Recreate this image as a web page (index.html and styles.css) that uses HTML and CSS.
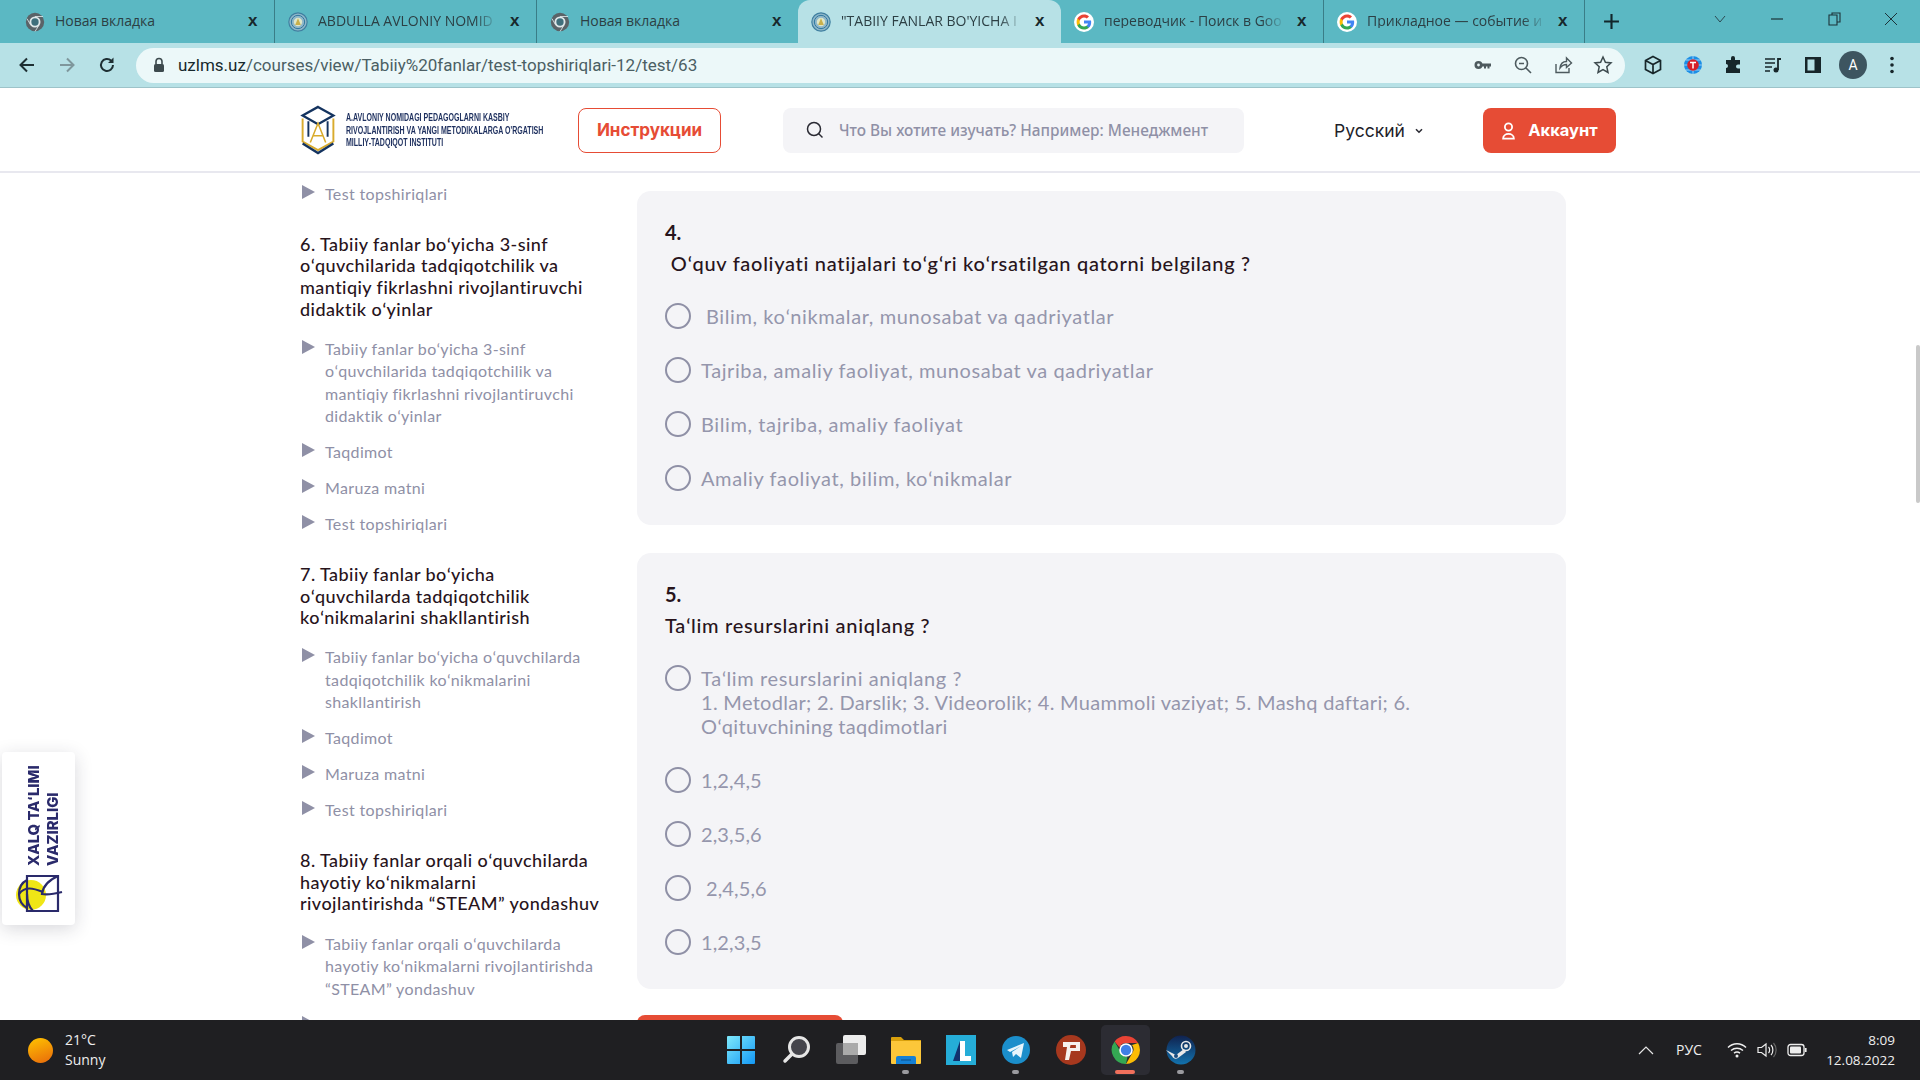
FILE: index.html
```html
<!DOCTYPE html>
<html lang="ru">
<head>
<meta charset="utf-8">
<title>uzlms</title>
<link rel="stylesheet" href="styles.css">
</head>
<body>
<svg class="defs" width="0" height="0">
  <defs>
    <symbol id="g-chrome" viewBox="0 0 24 24"><circle cx="12" cy="12" r="11" fill="#5a6368"/><circle cx="12" cy="12" r="6.6" fill="#dfe8ea"/><circle cx="12" cy="12" r="4.4" fill="#3f6f7c"/><path d="M12 5.4h9.6M7 16l-4.6-8M16.8 15.8L12 23.4" stroke="#dfe8ea" stroke-width="1"/></symbol>
    <symbol id="g-seal" viewBox="0 0 24 24"><circle cx="12" cy="12" r="11" fill="#8fb7c9" stroke="#3f7fa0" stroke-width="1.4"/><circle cx="12" cy="12" r="8" fill="none" stroke="#2f78a0" stroke-width="1.2"/><circle cx="12" cy="12" r="5" fill="#dfe7c8"/><path d="M12 7.5l3.4 8h-6.8z" fill="#c9b04c"/></symbol>
    <symbol id="g-google" viewBox="0 0 24 24"><circle cx="12" cy="12" r="12" fill="#fff"/><path d="M20.6 12.2c0-.7-.1-1.3-.2-1.9H12v3.6h4.8c-.2 1.1-.8 2.1-1.8 2.7v2.3h2.9c1.7-1.6 2.7-3.9 2.7-6.7z" fill="#4285f4"/><path d="M12 21c2.4 0 4.5-.8 5.9-2.2L15 16.6c-.8.5-1.8.9-3 .9-2.3 0-4.3-1.6-5-3.7H4v2.3C5.5 19 8.5 21 12 21z" fill="#34a853"/><path d="M7 13.8c-.4-1.1-.4-2.4 0-3.6V7.9H4c-1.2 2.5-1.2 5.6 0 8.2z" fill="#fbbc05"/><path d="M12 6.5c1.3 0 2.5.5 3.4 1.3L18 5.3C16.400 3.800 14.300 3 12 3 8.500 3 5.500 5 4 7.900l3 2.300c.7-2.100 2.700-3.700 5-3.700z" fill="#ea4335"/></symbol>
  </defs>
</svg>
<div class="screen">
  <div class="tabstrip">
    <div class="tab"><svg class="fav"><use href="#g-chrome"/></svg><span class="tab-title">Новая вкладка</span><span class="tab-x">x</span></div>
    <div class="tab sep"><svg class="fav"><use href="#g-seal"/></svg><span class="tab-title fade">ABDULLA AVLONIY NOMID</span><span class="tab-x">x</span></div>
    <div class="tab sep"><svg class="fav"><use href="#g-chrome"/></svg><span class="tab-title">Новая вкладка</span><span class="tab-x">x</span></div>
    <div class="tab active"><svg class="fav"><use href="#g-seal"/></svg><span class="tab-title fade">"TABIIY FANLAR BO'YICHA I</span><span class="tab-x">x</span></div>
    <div class="tab"><svg class="fav"><use href="#g-google"/></svg><span class="tab-title fade">переводчик - Поиск в Goo</span><span class="tab-x">x</span></div>
    <div class="tab sep end"><svg class="fav"><use href="#g-google"/></svg><span class="tab-title fade">Прикладное — событие и</span><span class="tab-x">x</span></div>
    <svg class="newtab" viewBox="0 0 16 16"><path d="M8 1v14M1 8h14" stroke="#12262b" stroke-width="2"/></svg>
    <div class="winctl">
      <svg class="wc" viewBox="0 0 16 16"><path d="M3 5l5 6 5-6" fill="none" stroke="#2c4a52" stroke-width="1"/></svg>
      <svg class="wc" viewBox="0 0 16 16"><path d="M2 8h12" stroke="#1c3238" stroke-width="1.2"/></svg>
      <svg class="wc" viewBox="0 0 16 16"><path d="M3 4h8v10H3zM6 4V2h8v9h-3" fill="none" stroke="#1c3238" stroke-width="1.100"/></svg>
      <svg class="wc" viewBox="0 0 16 16"><path d="M2 2l12 12M14 2L2 14" stroke="#1c3238" stroke-width="1"/></svg>
    </div>
  </div>

  <div class="toolbar">
    <svg class="tb" viewBox="0 0 20 20"><path d="M17 10H4M10 3.500L3.500 10l6.500 6.500" fill="none" stroke="#1e2f33" stroke-width="2"/></svg>
    <svg class="tb" viewBox="0 0 20 20"><path d="M3 10h13M10 3.500L16.500 10 10 16.500" fill="none" stroke="#7f979c" stroke-width="2"/></svg>
    <svg class="tb" viewBox="0 0 20 20"><path d="M16 10a6 6 0 1 1-1.800-4.300" fill="none" stroke="#1e2f33" stroke-width="2"/><path d="M16.500 2.500v5.500H11z" fill="#1e2f33"/></svg>
    <div class="omnibox">
      <svg class="lock" viewBox="0 0 12 16"><path d="M3 7V4.500a3 3 0 0 1 6 0V7" fill="none" stroke="#3d4a4e" stroke-width="1.600"/><rect x="1" y="7" width="10" height="8" rx="1.500" fill="#3d4a4e"/></svg>
      <span class="url"><b class="host">uzlms.uz</b>/courses/view/Tabiiy%20fanlar/test-topshiriqlari-12/test/63</span>
      <div class="omni-icons">
        <svg class="oi" viewBox="0 0 20 20"><circle cx="5.500" cy="10" r="4" fill="#4d5a5e"/><circle cx="5.500" cy="10" r="1.400" fill="#ecf8f9"/><path d="M9 8.500h9v3h-1.500v2h-2v-2H13v2h-2v-2H9z" fill="#4d5a5e"/></svg>
        <svg class="oi" viewBox="0 0 20 20"><circle cx="8.500" cy="8.500" r="6" fill="none" stroke="#4d5a5e" stroke-width="1.600"/><path d="M13 13l5 5M6 8.500h5" stroke="#4d5a5e" stroke-width="1.600"/></svg>
        <svg class="oi" viewBox="0 0 20 20"><path d="M3 9v8.500h13V13" fill="none" stroke="#4d5a5e" stroke-width="1.400"/><path d="M7 13c.5-4 3-6.500 6.500-6.500V3L18.500 8l-5 4.500V9.500C10.500 9.500 8.500 11 7 13z" fill="none" stroke="#4d5a5e" stroke-width="1.400"/></svg>
        <svg class="oi" viewBox="0 0 20 20"><path d="M10 2l2.400 5.300 5.600.6-4.200 3.900 1.200 5.700L10 14.600l-5 2.900 1.200-5.700L2 7.900l5.600-.6z" fill="none" stroke="#3d4a4e" stroke-width="1.500"/></svg>
      </div>
    </div>
    <div class="ext">
      <svg class="ex" viewBox="0 0 20 20"><path d="M10 1.500l7.500 4v9L10 18.500l-7.500-4v-9zM2.500 5.500l7.500 4 7.500-4M10 9.500v9" fill="none" stroke="#17262a" stroke-width="1.700"/></svg>
      <svg class="ex" viewBox="0 0 20 20"><circle cx="10" cy="10" r="9" fill="#1c8fe6"/><path d="M1 10h18M10 1v18M3 5h14M3 15h14" stroke="#cfe9fb" stroke-width=".7"/><circle cx="10" cy="10" r="5.800" fill="#d5202a"/><path d="M7 7.500h6M10 7.500v6" stroke="#fff" stroke-width="1.500"/></svg>
      <svg class="ex" viewBox="0 0 20 20"><path d="M8 3a2 2 0 0 1 4 0v2h5v4.500h-2a2 2 0 0 0 0 4h2V18H3v-5a2 2 0 0 0 0-4V5h5z" fill="#17262a"/></svg>
      <svg class="ex" viewBox="0 0 20 20"><path d="M2 4h10M2 8h10M2 12h7M2 16h5" stroke="#17262a" stroke-width="1.600"/><path d="M15 3v12" stroke="#17262a" stroke-width="1.800"/><circle cx="13" cy="15" r="2.500" fill="#17262a"/><path d="M15 3h3v2h-3z" fill="#17262a"/></svg>
      <svg class="ex" viewBox="0 0 20 20"><path d="M2 2h16v16H2z" fill="#17262a"/><path d="M4.500 4.500h7v11h-7z" fill="#b7e1e6"/></svg>
      <span class="avatar">A</span>
      <svg class="dots" viewBox="0 0 6 20"><circle cx="3" cy="3.500" r="1.800" fill="#17262a"/><circle cx="3" cy="10" r="1.800" fill="#17262a"/><circle cx="3" cy="16.500" r="1.800" fill="#17262a"/></svg>
    </div>
  </div>

  <div class="page">
    <header class="site-head">
      <div class="brand">
        <svg class="brand-mark" viewBox="0 0 36 52">
          <path d="M18 2L34 11 18 20 2 11z" fill="none" stroke="#14335f" stroke-width="2.400"/>
          <path d="M8 17v16M28 17v16" stroke="#14335f" stroke-width="2"/>
          <path d="M2 14v24l16 9 16-9V14" fill="none" stroke="#d9ab2d" stroke-width="2"/>
          <path d="M2 40l16 10 16-10" fill="none" stroke="#14335f" stroke-width="2.400"/>
          <path d="M10 39l8-20 8 20M13 32h10" fill="none" stroke="#d9ab2d" stroke-width="1.600"/>
        </svg>
        <div class="brand-text">A.AVLONIY NOMIDAGI PEDAGOGLARNI KASBIY<br>RIVOJLANTIRISH VA YANGI METODIKALARGA O'RGATISH<br>MILLIY-TADQIQOT INSTITUTI</div>
      </div>
      <a class="btn-outline">Инструкции</a>
      <div class="search">
        <svg class="search-ic" viewBox="0 0 20 20"><circle cx="9" cy="9" r="6.500" fill="none" stroke="#2a2a33" stroke-width="1.500"/><path d="M13.500 13.500l4 4" stroke="#2a2a33" stroke-width="1.500"/></svg>
        <span class="search-ph">Что Вы хотите изучать? Например: Менеджмент</span>
      </div>
      <div class="lang">Русский<svg class="caret" viewBox="0 0 10 10"><path d="M2.500 3.500l2.500 2.500 2.500-2.500" fill="none" stroke="#2a2a33" stroke-width="1.300"/></svg></div>
      <a class="btn-solid"><svg class="user" viewBox="0 0 16 20"><circle cx="8" cy="5.500" r="4" fill="none" stroke="#fff" stroke-width="2"/><path d="M2 18.500c0-7 12-7 12 0z" fill="none" stroke="#fff" stroke-width="2"/></svg>Аккаунт</a>
    </header>

    <div class="body">
      <aside class="side">
        <ul class="items first"><li class="item">Test topshiriqlari</li></ul>
        <h3 class="module">6. Tabiiy fanlar boʻyicha 3-sinf oʻquvchilarida tadqiqotchilik va mantiqiy fikrlashni rivojlantiruvchi didaktik oʻyinlar</h3>
        <ul class="items">
          <li class="item">Tabiiy fanlar boʻyicha 3-sinf oʻquvchilarida tadqiqotchilik va mantiqiy fikrlashni rivojlantiruvchi didaktik oʻyinlar</li>
          <li class="item">Taqdimot</li>
          <li class="item">Maruza matni</li>
          <li class="item">Test topshiriqlari</li>
        </ul>
        <h3 class="module">7. Tabiiy fanlar boʻyicha oʻquvchilarda tadqiqotchilik koʻnikmalarini shakllantirish</h3>
        <ul class="items">
          <li class="item">Tabiiy fanlar boʻyicha oʻquvchilarda tadqiqotchilik koʻnikmalarini shakllantirish</li>
          <li class="item">Taqdimot</li>
          <li class="item">Maruza matni</li>
          <li class="item">Test topshiriqlari</li>
        </ul>
        <h3 class="module">8. Tabiiy fanlar orqali oʻquvchilarda hayotiy koʻnikmalarni rivojlantirishda “STEAM” yondashuv</h3>
        <ul class="items">
          <li class="item">Tabiiy fanlar orqali oʻquvchilarda hayotiy koʻnikmalarni rivojlantirishda “STEAM” yondashuv</li>
          <li class="item">Taqdimot</li>
        </ul>
      </aside>
      <main class="main">
        <section class="card">
          <div class="q-num">4.</div>
          <div class="q-text">&nbsp;Oʻquv faoliyati natijalari toʻgʻri koʻrsatilgan qatorni belgilang ?</div>
          <div class="opts">
            <label class="opt"><span class="radio"></span><span class="opt-t lead">Bilim, koʻnikmalar, munosabat va qadriyatlar</span></label>
            <label class="opt"><span class="radio"></span><span class="opt-t">Tajriba, amaliy faoliyat, munosabat va qadriyatlar</span></label>
            <label class="opt"><span class="radio"></span><span class="opt-t">Bilim, tajriba, amaliy faoliyat</span></label>
            <label class="opt"><span class="radio"></span><span class="opt-t">Amaliy faoliyat, bilim, koʻnikmalar</span></label>
          </div>
        </section>
        <section class="card">
          <div class="q-num">5.</div>
          <div class="q-text">Taʻlim resurslarini aniqlang ?</div>
          <div class="opts">
            <label class="opt"><span class="radio"></span><span class="opt-t">Taʻlim resurslarini aniqlang ?<br><span class="tight">1. Metodlar; 2. Darslik; 3. Videorolik; 4. Muammoli vaziyat; 5. Mashq daftari; 6. Oʻqituvchining taqdimotlari</span></span></label>
            <label class="opt"><span class="radio"></span><span class="opt-t nums">1,2,4,5</span></label>
            <label class="opt"><span class="radio"></span><span class="opt-t nums">2,3,5,6</span></label>
            <label class="opt"><span class="radio"></span><span class="opt-t nums lead">2,4,5,6</span></label>
            <label class="opt"><span class="radio"></span><span class="opt-t nums">1,2,3,5</span></label>
          </div>
        </section>
        <a class="submit"></a>
      </main>
    </div>

    <div class="ministry">
      <div class="ministry-text">XALQ TAʻLIMI<br>VAZIRLIGI</div>
      <svg class="ministry-ic" viewBox="0 0 50 45">
        <circle cx="16" cy="25" r="15" fill="#f0e616"/>
        <path d="M12 6h31v35H12z" fill="none" stroke="#2a2a6b" stroke-width="2.200"/>
        <path d="M12 10c-6 3-8 8-8 14s3 11 8 14" fill="none" stroke="#2a2a6b" stroke-width="2.200"/>
        <path d="M4 24c6-8 14-6 24-2M12 24c0 8 2 13 6 17M43 6c-9 4-15 10-16 18 5 1 12 0 20-2" fill="none" stroke="#2a2a6b" stroke-width="2.200"/>
      </svg>
    </div>
    <div class="scroll-thumb"></div>
  </div>

  <footer class="taskbar">
    <div class="weather">
      <span class="sun"></span>
      <div class="weather-t"><div>21°C</div><div>Sunny</div></div>
    </div>
    <div class="apps">
      <div class="app"><svg class="ai" viewBox="0 0 30 30"><defs><linearGradient id="w" x1="0" y1="0" x2="1" y2="1"><stop offset="0" stop-color="#7fe9fb"/><stop offset="1" stop-color="#1398f5"/></linearGradient></defs><path d="M1 2a1 1 0 0 1 1-1h12v13H1zM16 1h12a1 1 0 0 1 1 1v12H16zM1 16h13v13H2a1 1 0 0 1-1-1zM16 16h13v12a1 1 0 0 1-1 1H16z" fill="url(#w)"/></svg></div>
      <div class="app"><svg class="ai" viewBox="0 0 30 30"><circle cx="18" cy="12" r="9.500" fill="#45454c" stroke="#e6e6e6" stroke-width="3"/><path d="M11 19l-7 7" stroke="#e6e6e6" stroke-width="3.500" stroke-linecap="round"/></svg></div>
      <div class="app"><svg class="ai" viewBox="0 0 30 30"><rect x="0" y="8" width="22" height="21" rx="2" fill="#5c5c5f"/><rect x="7" y="0" width="23" height="20" rx="2" fill="#ececec"/><rect x="7" y="8" width="15" height="12" fill="#aaa"/></svg></div>
      <div class="app dot"><svg class="ai" viewBox="0 0 30 30"><path d="M0 3a1 1 0 0 1 1-1h9l3 3h17v7H0z" fill="#d9a00c"/><path d="M0 6h30v22a1 1 0 0 1-1 1H1a1 1 0 0 1-1-1z" fill="#fcc73a"/><path d="M5 29v-6a2 2 0 0 1 2-2h16a2 2 0 0 1 2 2v6z" fill="#1580d4"/><path d="M10 25h10" stroke="#0d4f88" stroke-width="1"/></svg></div>
      <div class="app"><svg class="ai" viewBox="0 0 30 30"><rect width="30" height="30" fill="#25add8"/><path d="M14 6h5v15h6v5H14z" fill="#fff"/><path d="M7 26L14 6v20z" fill="#12326e"/></svg></div>
      <div class="app dot"><svg class="ai" viewBox="0 0 30 30"><circle cx="15" cy="15" r="14" fill="#1b8ecb"/><path d="M6 15l17-7-3 15-5-4-3 3-1-5 9-6-11 6z" fill="#e8f5fc"/></svg></div>
      <div class="app"><svg class="ai" viewBox="0 0 30 30"><circle cx="15" cy="15" r="15" fill="#a6381e"/><path d="M7 7h17v9h-9l-2 9H9l2-13H7zM14.500 10l-.6 3h6v-3z" fill="#f6f1ee" fill-rule="evenodd"/></svg></div>
      <div class="app current"><span class="app-bg"></span><svg class="ai" viewBox="0 0 30 30"><path d="M15 1a14 14 0 0 1 12.100 7H15a7 7 0 0 0-6.500 4.400L3.600 6.500A14 14 0 0 1 15 1z" fill="#e94335"/><path d="M27.100 8A14 14 0 0 1 15 29l6-10.500A7 7 0 0 0 21 10z" fill="#fbbc05"/><path d="M15 29A14 14 0 0 1 3.600 6.500l6 10.500a7 7 0 0 0 6.800 5z" fill="#34a853"/><circle cx="15" cy="15" r="6.800" fill="#fff"/><circle cx="15" cy="15" r="5.200" fill="#3f7fe6"/></svg></div>
      <div class="app dot"><svg class="ai" viewBox="0 0 30 30"><defs><linearGradient id="st" x1="0" y1="0" x2="0" y2="1"><stop offset="0" stop-color="#10224f"/><stop offset="1" stop-color="#1272ad"/></linearGradient></defs><circle cx="15" cy="15" r="14.500" fill="url(#st)"/><circle cx="20" cy="11" r="4.500" fill="none" stroke="#e8e8e8" stroke-width="1.600"/><circle cx="20" cy="11" r="2" fill="#e8e8e8"/><path d="M0 15l10 5 8-6 2 3-8 6a4 4 0 0 1-6-2z" fill="#e8e8e8"/><circle cx="10" cy="21" r="2" fill="#1a4d80"/></svg></div>
    </div>
    <div class="tray">
      <svg class="t-caret" viewBox="0 0 16 10"><path d="M1 9l7-7 7 7" fill="none" stroke="#e6e6e6" stroke-width="1.200"/></svg>
      <span class="t-lang">РУС</span>
      <svg class="t-ic" viewBox="0 0 20 16"><path d="M1 5.500c5-5 13-5 18 0M4 8.500c3.500-3 8.500-3 12 0M7 11.200c2-1.500 4-1.500 6 0" fill="none" stroke="#eee" stroke-width="1.500"/><circle cx="10" cy="14" r="1.500" fill="#eee"/></svg>
      <svg class="t-ic" viewBox="0 0 20 16"><path d="M1 5.500h3.500L9 2v12L4.500 10.500H1z" fill="none" stroke="#eee" stroke-width="1.200"/><path d="M11.500 5c1.500 1.500 1.500 4.500 0 6M14 3c2.500 2.500 2.500 7.500 0 10" fill="none" stroke="#eee" stroke-width="1.200"/><path d="M16.500 1c3.500 4 3.500 10 0 14" fill="none" stroke="#666" stroke-width="1.200"/></svg>
      <svg class="t-ic" viewBox="0 0 20 16"><rect x="1" y="2.500" width="16" height="11" rx="2.500" fill="none" stroke="#eee" stroke-width="1.300"/><rect x="3" y="4.500" width="11" height="7" rx="1" fill="#eee"/><rect x="17.800" y="6" width="1.800" height="4" fill="#eee"/></svg>
      <div class="clock"><div>8:09</div><div>12.08.2022</div></div>
    </div>
  </footer>
</div>
</body>
</html>
```
FILE: styles.css
```css
* { box-sizing: border-box; }
html, body { margin: 0; height: 100%; overflow: hidden; }
.defs { position: absolute; }
ul { list-style: none; margin: 0; padding: 0; }
.screen { width: 1920px; height: 1080px; display: flex; flex-direction: column; background: #fff; font-family: Lato, "Noto Sans", sans-serif; }

/* Browser chrome */
.tabstrip { height: 43px; flex: none; background: #5bb8c3; display: flex; align-items: stretch; padding-left: 12px; }
.tab { width: 262px; display: flex; align-items: center; padding: 0 14px 0 13px; position: relative; font: 14px/1 "Open Sans", "Noto Sans", sans-serif; color: #2c3f44; }
.tab.sep { border-left: 1px solid #3a7d87; }
.tab.end { border-right: 1px solid #3a7d87; width: 262px; }
.tab.active { background: #b7e1e6; border-radius: 12px 12px 0 0; width: 263px; }
.fav { width: 20px; height: 20px; flex: none; margin-right: 10px; }
.tab-title { flex: 1; white-space: nowrap; min-width: 0; margin: -2px 8px 0 0; }
.tab-title.fade { -webkit-mask-image: linear-gradient(90deg, #000 85%, transparent 98%); mask-image: linear-gradient(90deg, #000 85%, transparent 98%); }
.tab-x { font: bold 17px/1 "Liberation Sans", sans-serif; color: #18282c; flex: none; width: 12px; margin-top: -2px; }
.newtab { width: 17px; height: 17px; align-self: center; margin-left: 18px; }
.winctl { margin-left: auto; display: flex; align-items: center; margin-top: -6px; padding-right: 21px; }
.wc { width: 16px; height: 16px; margin-left: 41px; }
.winctl .wc:first-child { margin-left: 0; }

.toolbar { height: 45px; flex: none; background: #b7e1e6; border-bottom: 1px solid #9dc3c9; display: flex; align-items: center; padding-left: 17px; }
.tb { width: 20px; height: 20px; margin-right: 20px; flex: none; }
.omnibox { width: 1489px; height: 35px; margin-left: -1px; background: #ecf8f9; border-radius: 18px; display: flex; align-items: center; padding: 0 12px 0 17px; flex: none; }
.lock { width: 12px; height: 16px; flex: none; margin-right: 13px; }
.url { font: 17px/1 Roboto, sans-serif; color: #4b5f64; white-space: nowrap; }
.host { font-weight: 400; color: #16282c; }
.omni-icons { margin-left: auto; display: flex; gap: 20px; }
.oi { width: 20px; height: 20px; }
.ext { display: flex; align-items: center; margin-left: 18px; gap: 20px; }
.ex { width: 20px; height: 20px; flex: none; }
.avatar { width: 28px; height: 28px; border-radius: 50%; background: #3d5560; color: #fff; font: 14px/28px Roboto, sans-serif; text-align: center; margin-left: -4px; margin-right: -2px; }
.dots { width: 6px; height: 20px; margin-left: 4px; }

/* Site */
.page { flex: 1; min-height: 0; display: flex; flex-direction: column; overflow: hidden; position: relative; }
.site-head { height: 85px; flex: none; border-bottom: 2px solid #e8e8ef; display: flex; align-items: center; padding: 1px 0 0 300px; }
.brand { display: flex; align-items: center; width: 278px; flex: none; }
.brand-mark { width: 36px; height: 50px; flex: none; margin-right: 10px; }
.brand-text { font: bold 10.500px/12.700px "Liberation Sans", sans-serif; color: #1d2f5e; white-space: nowrap; transform: scaleX(.67); transform-origin: left center; width: 130px; }
.btn-outline { width: 143px; height: 45px; border: 1px solid #e64c35; border-radius: 8px; display: flex; align-items: center; justify-content: center; padding-top: 1px; color: #e64c35; font: 700 17px/1 Inter, sans-serif; flex: none; }
.search { width: 461px; height: 45px; margin-left: 62px; background: #f4f4f7; border-radius: 8px; display: flex; align-items: center; padding-left: 22px; flex: none; }
.search-ic { width: 20px; height: 20px; flex: none; margin-right: 14px; }
.search-ph { font: 500 15.400px/1 "Noto Sans", sans-serif; color: #8f90a6; padding-top: 2px; }
.lang { margin-left: 90px; width: 149px; flex: none; display: flex; align-items: center; padding-top: 2px; font: 400 17.500px/1 Inter, sans-serif; color: #1f1f2b; }
.caret { width: 12px; height: 12px; margin-left: 8px; }
.btn-solid { width: 133px; height: 45px; background: #e64c35; border-radius: 8px; display: flex; align-items: center; justify-content: center; gap: 12px; padding-top: 1px; color: #fff; font: 700 16.500px/1 Inter, sans-serif; flex: none; }
.user { width: 15px; height: 18px; }

.body { flex: 1; min-height: 0; display: flex; padding-left: 300px; overflow: hidden; }
.side { width: 305px; flex: none; margin-right: 32px; padding-top: 10px; }
.items { display: flex; flex-direction: column; gap: 13.500px; }
.item { position: relative; padding-left: 25px; font: 16px/22.500px Lato, sans-serif; letter-spacing: .35px; color: #8f90a6; }
.item::before { content: ""; position: absolute; left: 2px; top: 2px; border-left: 13px solid #8f90a6; border-top: 7.500px solid transparent; border-bottom: 7.500px solid transparent; }
.module { margin: 28px 0 17.500px; font: 500 18px/21.700px Lato, sans-serif; letter-spacing: .44px; color: #28141c; }
.main { width: 929px; flex: none; padding-top: 18px; }
.card { background: #f4f4f7; border-radius: 14px; padding: 29px 28px 35px; margin-bottom: 28px; }
.card + .card { margin-bottom: 26px; }
.q-num { font: 700 20px/24px Lato, sans-serif; color: #28141c; margin-bottom: 7px; }
.q-text { font: 500 20px/24px Lato, sans-serif; letter-spacing: .7px; color: #28141c; margin-bottom: 29px; }
.opts { display: flex; flex-direction: column; gap: 30px; }
.opt { display: flex; align-items: flex-start; }
.radio { width: 26px; height: 26px; flex: none; border-radius: 50%; border: 2px solid #8f90a6; margin: -1px 10px -1px 0; background: transparent; }
.opt-t { font: 20px/24px Lato, sans-serif; letter-spacing: .6px; color: #9596ac; flex: 1; padding-right: 50px; }
.opt-t.lead { padding-left: 5px; }
.opt-t.nums { letter-spacing: .1px; }
.tight { letter-spacing: .3px; }
.submit { display: block; width: 206px; height: 50px; background: #e64c35; border-radius: 8px; }

.ministry { position: absolute; left: 2px; top: 664px; width: 73px; height: 173px; background: #fff; border-radius: 4px; box-shadow: 0 4px 18px rgba(40,40,60,.18); }
.ministry-text { position: absolute; left: 23px; top: 13px; height: 101px; writing-mode: vertical-rl; transform: rotate(180deg); font: 800 14.800px/19px Inter, sans-serif; color: #2a2a6b; white-space: nowrap; }
.ministry-ic { position: absolute; left: 13px; top: 118px; width: 50px; height: 45px; }
.scroll-thumb { position: absolute; right: 0; top: 257px; width: 4px; height: 158px; background: #c9c9c9; border-radius: 2px; }

/* Taskbar */
.taskbar { height: 60px; flex: none; background: #1f1f22; display: flex; align-items: stretch; color: #eee; font: 14px/20px "Open Sans", "Noto Sans", sans-serif; }
.weather { width: 713px; flex: none; display: flex; align-items: center; padding-left: 28px; gap: 12px; }
.sun { width: 25px; height: 25px; border-radius: 50%; background: linear-gradient(160deg, #ffc400, #e8690b); }
.apps { display: flex; flex: none; }
.app { width: 55px; height: 60px; display: flex; align-items: center; justify-content: center; position: relative; }
.ai { width: 30px; height: 30px; position: relative; }
.app.dot::after { content: ""; position: absolute; left: 24px; top: 50px; width: 7px; height: 4px; border-radius: 2px; background: #9a9a9f; }
.app-bg { position: absolute; left: 3px; top: 5px; width: 49px; height: 50px; background: #2c2c33; border-radius: 5px; }
.app.current::after { content: ""; position: absolute; left: 17px; top: 50px; width: 20px; height: 4px; border-radius: 2px; background: #f0705c; }
.tray { flex: 1; display: flex; align-items: center; padding-left: 430px; padding-right: 25px; }
.t-caret { width: 16px; height: 10px; }
.t-lang { margin-left: 22px; font-size: 14px; }
.t-ic { width: 20px; height: 16px; margin-left: 10px; }
.t-lang + .t-ic { margin-left: 25px; }
.clock { margin-left: auto; text-align: right; font-size: 13.500px; }
```
